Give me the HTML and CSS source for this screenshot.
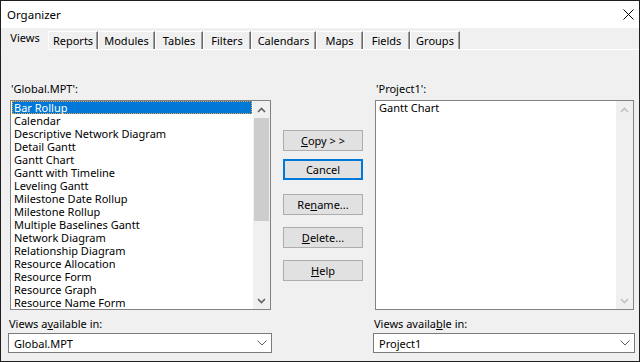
FILE: index.html
```html
<!DOCTYPE html>
<html lang="en">
<head>
  <meta charset="UTF-8">
  <title>Organizer</title>
  <link rel="stylesheet" href="styles.css">
</head>
<body>
  <div class="dialog">
    <div class="titlebar">
      <span class="title">Organizer</span>
      <svg class="close" width="11" height="11" viewBox="0 0 11 11"><path d="M0.5 0.5 L10.5 10.5 M10.5 0.5 L0.5 10.5" stroke="#000" stroke-width="1"/></svg>
    </div>

    <div class="tabs">
      <div class="tab active" style="width:46px">Views</div>
      <div class="tab" style="width:50px">Reports</div>
      <div class="tab" style="width:57px">Modules</div>
      <div class="tab" style="width:48px">Tables</div>
      <div class="tab" style="width:48px">Filters</div>
      <div class="tab" style="width:65px">Calendars</div>
      <div class="tab" style="width:47px">Maps</div>
      <div class="tab" style="width:47px">Fields</div>
      <div class="tab" style="width:50px">Groups</div>
    </div>

    <div class="panel">
      <div class="cols">
        <div class="side">
          <div class="label indent">'Global.MPT':</div>
          <div class="listbox">
            <div class="items">
              <div class="item selected">Bar Rollup</div>
              <div class="item">Calendar</div>
              <div class="item">Descriptive Network Diagram</div>
              <div class="item">Detail Gantt</div>
              <div class="item">Gantt Chart</div>
              <div class="item">Gantt with Timeline</div>
              <div class="item">Leveling Gantt</div>
              <div class="item">Milestone Date Rollup</div>
              <div class="item">Milestone Rollup</div>
              <div class="item">Multiple Baselines Gantt</div>
              <div class="item">Network Diagram</div>
              <div class="item">Relationship Diagram</div>
              <div class="item">Resource Allocation</div>
              <div class="item">Resource Form</div>
              <div class="item">Resource Graph</div>
              <div class="item">Resource Name Form</div>
            </div>
            <div class="scrollbar">
              <div class="arrow"><svg width="9" height="6" viewBox="0 0 9 6"><path d="M1 5 L4.5 1.5 L8 5" fill="none" stroke="#606060" stroke-width="1.6"/></svg></div>
              <div class="track"><div class="thumb"></div></div>
              <div class="arrow"><svg width="9" height="6" viewBox="0 0 9 6"><path d="M1 1 L4.5 4.5 L8 1" fill="none" stroke="#606060" stroke-width="1.6"/></svg></div>
            </div>
          </div>
          <div class="label lower">Views a<u>v</u>ailable in:</div>
          <div class="combo">
            <span>Global.MPT</span>
            <svg width="10" height="6" viewBox="0 0 10 6"><path d="M0.5 0.5 L5 5 L9.5 0.5" fill="none" stroke="#606060" stroke-width="1"/></svg>
          </div>
        </div>

        <div class="buttons">
          <button class="btn"><u>C</u>opy &gt; &gt;</button>
          <button class="btn default">Cancel</button>
          <button class="btn gap-lg">Re<u>n</u>ame...</button>
          <button class="btn gap-md"><u>D</u>elete...</button>
          <button class="btn gap-md"><u>H</u>elp</button>
        </div>

        <div class="side right">
          <div class="label indent">'Project1':</div>
          <div class="listbox">
            <div class="items">
              <div class="item">Gantt Chart</div>
            </div>
            <div class="scrollbar disabled">
              <div class="arrow"><svg width="9" height="6" viewBox="0 0 9 6"><path d="M1 5 L4.5 1.5 L8 5" fill="none" stroke="#c0c0c0" stroke-width="1.6"/></svg></div>
              <div class="track"></div>
              <div class="arrow"><svg width="9" height="6" viewBox="0 0 9 6"><path d="M1 1 L4.5 4.5 L8 1" fill="none" stroke="#c0c0c0" stroke-width="1.6"/></svg></div>
            </div>
          </div>
          <div class="label lower">Views availa<u>b</u>le in:</div>
          <div class="combo">
            <span>Project1</span>
            <svg width="10" height="6" viewBox="0 0 10 6"><path d="M0.5 0.5 L5 5 L9.5 0.5" fill="none" stroke="#606060" stroke-width="1"/></svg>
          </div>
        </div>
      </div>
    </div>
  </div>
</body>
</html>
```

FILE: styles.css
```css
* { box-sizing: border-box; }
body { margin: 0; font-family: "Noto Sans", "Open Sans", sans-serif; font-size: 11px; color: #000; }

.dialog { width: 640px; height: 362px; border: 1px solid #1f1f1f; background: #f0f0f0; display: flex; flex-direction: column; }

.titlebar { height: 27px; background: #fff; display: flex; align-items: center; justify-content: space-between; padding: 0 5px 0 6px; }
.title { font-size: 11.5px; }

.tabs { height: 21px; display: flex; align-items: flex-end; padding-left: 1px; }
.tab { height: 18px; line-height: 17px; text-align: center; background: #f0f0f0; border-top: 1px solid #fff; border-left: 1px solid #fff; border-right: 1px solid #696969; box-shadow: inset -1px 0 0 #a0a0a0; white-space: nowrap; }
.tab.active { height: 21px; margin-bottom: -1px; line-height: 18px; position: relative; z-index: 1; border: none; box-shadow: none; padding-bottom: 2px; }

.panel { flex: 1; border-top: 1px solid #fff; padding-top: 31px; }
.cols { display: flex; padding-left: 7px; }

.side { width: 264px; display: flex; flex-direction: column; }
.side.right { width: 262px; margin-left: 10px; }
.label { height: 15px; line-height: 15px; white-space: nowrap; }
.label.indent { padding-left: 3px; margin-bottom: 4px; }
.label.lower { margin-top: 6px; margin-bottom: 2px; padding-left: 1px; }

.listbox { margin-left: 2px; height: 210px; border: 1px solid #828282; background: #fff; display: flex; }
.side .listbox { width: 261px; }
.side.right .listbox { width: 259px; }
.items { flex: 1; padding: 0 1px; }
.item { height: 13px; line-height: 13px; padding-left: 2px; white-space: nowrap; }
.item.selected { background: #0078d7; color: #fff; outline: 1px dotted #f7a23a; outline-offset: -1px; }
.side.right .item { padding-left: 2px; }

.scrollbar { width: 17px; background: #f0f0f0; display: flex; flex-direction: column; }
.arrow { height: 17px; display: flex; align-items: center; justify-content: center; }
.track { flex: 1; padding: 0 1px; }
.thumb { height: 103px; background: #cdcdcd; }

.combo { height: 20px; border: 1px solid #7a7a7a; background: #fff; display: flex; align-items: center; justify-content: space-between; padding: 0 4px 0 5px; }

.buttons { width: 80px; margin-left: 11px; padding-top: 49px; display: flex; flex-direction: column; }
.btn { height: 21px; width: 80px; margin: 0; padding: 0; font-family: inherit; font-size: 11px; color: #000; background: #e1e1e1; border: 1px solid #adadad; }
.btn + .btn { margin-top: 8px; }
.btn.default { border: 2px solid #0078d7; }
.btn.gap-lg { margin-top: 14px; }
.btn.gap-md { margin-top: 12px; }
```
